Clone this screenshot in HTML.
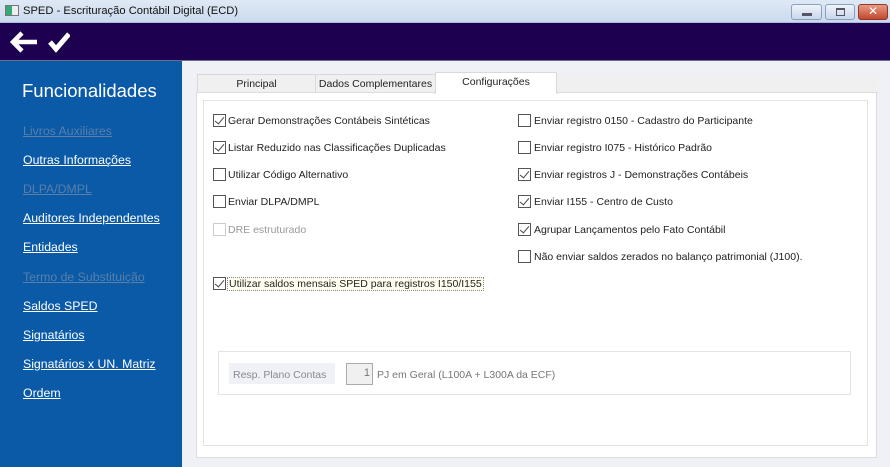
<!DOCTYPE html>
<html><head><meta charset="utf-8"><style>
*{margin:0;padding:0;box-sizing:border-box}
body{width:890px;height:467px;overflow:hidden;position:relative;background:#eff1f7;font-family:"Liberation Sans","DejaVu Sans",sans-serif;font-size:11px;color:#222}
.a{position:absolute}
#title{left:0;top:0;width:890px;height:23px;background:linear-gradient(#dfe9f5,#cbdaee);border-bottom:1px solid #a9bdd6}
#title span{position:absolute;left:23px;top:5px;font-size:11.2px;color:#111}
.wb{top:4px;height:16px;border:1px solid #8aa0bd;border-radius:3px;background:linear-gradient(#eef3fa,#c9d7ea)}
#bar{left:0;top:23px;width:890px;height:38px;background:#1e0050;border-bottom:1px solid #6b6b8a}
#side{left:0;top:61px;width:182px;height:406px;background:#0a5aa8}
#side .h{position:absolute;left:22px;top:19px;font-size:18.5px;color:#fff}
.l{position:absolute;left:23px;font-size:12.3px;color:#fff;text-decoration:underline}
.l.d{color:#5a7fa8}
#strip{left:196px;top:74px;width:682px;height:19px;background:#f0f0f0;border-bottom:1px solid #dcdcdc}
.tab{position:absolute;top:74px;height:19px;border:1px solid #d9d9d9;border-bottom:none;text-align:center;line-height:19px;font-size:10.5px;background:#f0f0f0}
#panel{left:196px;top:92px;width:681px;height:366px;background:#fff;border:1px solid #dcdcdc}
#grp{left:203px;top:100px;width:665px;height:346px;border:1px solid #e3e3e3}
.cb{position:absolute;width:13px;height:13px;border:1px solid #555;background:#fff;margin-top:1px}
.cb.c::after{content:"";position:absolute;left:3px;top:0px;width:4px;height:8px;border-right:1.5px solid #444;border-bottom:1.5px solid #444;transform:rotate(40deg)}
.cb.dis{border-color:#ccc}
.t{position:absolute;font-size:10.5px;color:#222;white-space:nowrap;margin-top:1px}
</style></head><body>
<div id="title" class="a">
<div class="a" style="left:5px;top:5px;width:14px;height:11px;border:1px solid #777;background:linear-gradient(90deg,#3a7 0 50%,#eee 50%)"></div>
<span>SPED - Escrituração Contábil Digital (ECD)</span>
<div class="a wb" style="left:791px;width:31px"><div class="a" style="left:10px;top:8px;width:10px;height:3px;background:#556"></div></div>
<div class="a wb" style="left:825px;width:30px"><div class="a" style="left:10px;top:3px;width:9px;height:8px;border:1px solid #556;border-top-width:2px"></div></div>
<div class="a wb" style="left:858px;width:30px;background:linear-gradient(#e89a84,#c3482c);border-color:#8d3a2a;color:#fff;font-weight:bold;text-align:center;line-height:13px;font-size:12px">✕</div>
</div>
<div id="bar" class="a">
<svg class="a" style="left:10px;top:8px" width="60" height="22" viewBox="0 0 60 22"><path d="M12 2 L3 11 L12 20 M3 11 H27" stroke="#fff" stroke-width="4.5" fill="none" stroke-linejoin="miter"/><path d="M40 11 L46 18 L59 3" stroke="#fff" stroke-width="5" fill="none"/></svg>
</div>
<div id="side" class="a">
<div class="h">Funcionalidades</div>
<div class="l d" style="top:63px">Livros Auxiliares</div>
<div class="l" style="top:92px">Outras Informações</div>
<div class="l d" style="top:121px">DLPA/DMPL</div>
<div class="l" style="top:150px">Auditores Independentes</div>
<div class="l" style="top:179px">Entidades</div>
<div class="l d" style="top:209px">Termo de Substituição</div>
<div class="l" style="top:238px">Saldos SPED</div>
<div class="l" style="top:267px">Signatários</div>
<div class="l" style="top:296px">Signatários x UN. Matriz</div>
<div class="l" style="top:325px">Ordem</div>
</div>
<div id="strip" class="a"></div>
<div class="tab" style="left:197px;width:119px">Principal</div>
<div class="tab" style="left:315px;width:121px">Dados Complementares</div>
<div id="panel" class="a"></div>
<div class="tab" style="left:435px;top:72px;width:122px;height:22px;background:#fff;z-index:2">Configurações</div>
<div id="grp" class="a"></div>

<div class="cb c" style="left:213px;top:113px"></div><div class="t" style="left:228px;top:114px">Gerar Demonstrações Contábeis Sintéticas</div>
<div class="cb c" style="left:213px;top:140px"></div><div class="t" style="left:228px;top:141px">Listar Reduzido nas Classificações Duplicadas</div>
<div class="cb" style="left:213px;top:167px"></div><div class="t" style="left:228px;top:168px">Utilizar Código Alternativo</div>
<div class="cb" style="left:213px;top:194px"></div><div class="t" style="left:228px;top:195px">Enviar DLPA/DMPL</div>
<div class="cb dis" style="left:213px;top:222px"></div><div class="t" style="left:228px;top:223px;color:#999">DRE estruturado</div>
<div class="cb c" style="left:213px;top:276px"></div><div class="t" style="left:227px;top:276px;border:1px dotted #888;padding:0 1px;background:#fffef0">Utilizar saldos mensais SPED para registros I150/I155</div>

<div class="cb" style="left:518px;top:113px"></div><div class="t" style="left:534px;top:114px">Enviar registro 0150 - Cadastro do Participante</div>
<div class="cb" style="left:518px;top:140px"></div><div class="t" style="left:534px;top:141px">Enviar registro I075 - Histórico Padrão</div>
<div class="cb c" style="left:518px;top:167px"></div><div class="t" style="left:534px;top:168px">Enviar registros J - Demonstrações Contábeis</div>
<div class="cb c" style="left:518px;top:194px"></div><div class="t" style="left:534px;top:195px">Enviar I155 - Centro de Custo</div>
<div class="cb c" style="left:518px;top:222px"></div><div class="t" style="left:534px;top:223px">Agrupar Lançamentos pelo Fato Contábil</div>
<div class="cb" style="left:518px;top:249px"></div><div class="t" style="left:534px;top:250px">Não enviar saldos zerados no balanço patrimonial (J100).</div>

<div class="a" style="left:218px;top:351px;width:633px;height:44px;border:1px solid #e3e3e3"></div>
<div class="a" style="left:229px;top:363px;width:106px;height:21px;background:#eff1f7"></div>
<div class="t" style="left:233px;top:368px;color:#8a8a8a">Resp. Plano Contas</div>
<div class="a" style="left:346px;top:363px;width:27px;height:22px;border:1px solid #aaa;background:#f0f0f0;text-align:right;padding-right:2px;line-height:19px;color:#777">1</div>
<div class="t" style="left:377px;top:368px;color:#777">PJ em Geral (L100A + L300A da ECF)</div>
</body></html>
